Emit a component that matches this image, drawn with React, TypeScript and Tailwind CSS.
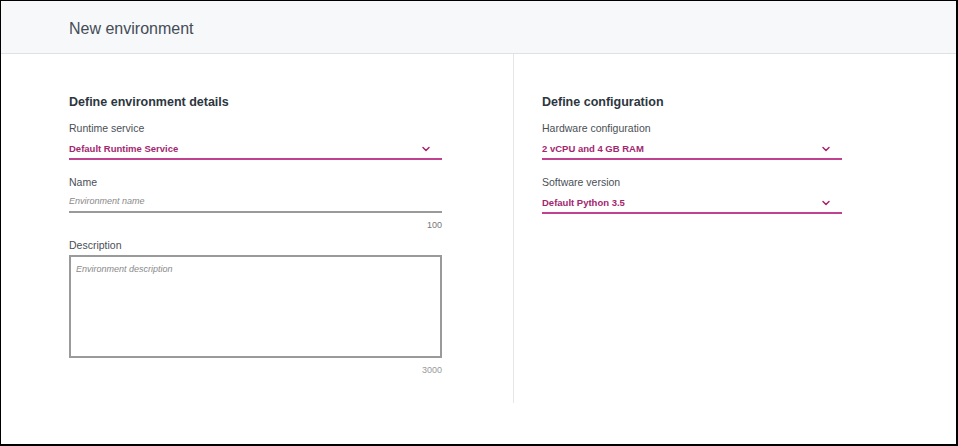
import { ChevronDown } from "lucide-react";

const font = { fontFamily: '"Liberation Sans", Arial, sans-serif' };

function Select({ label, value }: { label: string; value: string }) {
  return (
    <div className="flex flex-col">
      <span className="text-[10.5px] leading-[14px] text-[#4a4f55]">{label}</span>
      <div className="mt-[7px] flex h-[18px] items-center justify-between border-b-2 border-[#c0418f] pb-[3px]">
        <span className="text-[9.5px] font-bold leading-[12px] text-[#a3266e]">{value}</span>
        <ChevronDown className="mr-[10px] h-[12px] w-[12px] text-[#a3266e]" strokeWidth={3} />
      </div>
    </div>
  );
}

export default function App() {
  return (
    <div
      style={font}
      className="flex h-[446px] w-[958px] flex-col border-t border-l border-r-2 border-b-2 border-black bg-white"
    >
      {/* Header */}
      <div className="flex h-[53px] shrink-0 items-center border-b border-[#dfe1e4] bg-[#f7f8fa] pl-[68px]">
        <h1 className="pt-[4px] text-[16px] leading-[20px] text-[#444c56]">New environment</h1>
      </div>

      <div className="flex">
        {/* Left column */}
        <div className="flex h-[349px] w-[513px] shrink-0 flex-col border-r border-[#e6e6e6] pl-[68px] pt-[40px]">
          <div className="flex w-[373px] flex-col">
            <h2 className="text-[12.5px] font-bold leading-[16px] text-[#2d3640]">Define environment details</h2>
            <div className="mt-[11px]">
              <Select label="Runtime service" value="Default Runtime Service" />
            </div>

            <span className="mt-[15px] text-[10.5px] leading-[14px] text-[#4a4f55]">Name</span>
            <div className="mt-[6px] border-b-2 border-[#9a9a9a] pb-[4px] text-[9px] italic leading-[12px] text-[#8a8a8a]">
              Environment name
            </div>
            <span className="mt-[6px] self-end text-[9px] leading-[12px] text-[#777]">100</span>

            <span className="mt-[7px] text-[10.5px] leading-[14px] text-[#4a4f55]">Description</span>
            <div className="mt-[3px] h-[103px] border-2 border-[#9a9a9a] px-[5px] pt-[6px] text-[9px] italic leading-[12px] text-[#8a8a8a]">
              Environment description
            </div>
            <span className="mt-[6px] self-end text-[9px] leading-[12px] text-[#999]">3000</span>
          </div>
        </div>

        {/* Right column */}
        <div className="flex w-[300px] flex-col pl-[28px] pt-[40px]">
          <div className="flex w-[300px] flex-col">
            <h2 className="text-[12.5px] font-bold leading-[16px] text-[#2d3640]">Define configuration</h2>
            <div className="mt-[11px]">
              <Select label="Hardware configuration" value="2 vCPU and 4 GB RAM" />
            </div>
            <div className="mt-[15px]">
              <Select label="Software version" value="Default Python 3.5" />
            </div>
          </div>
        </div>
      </div>
    </div>
  );
}
